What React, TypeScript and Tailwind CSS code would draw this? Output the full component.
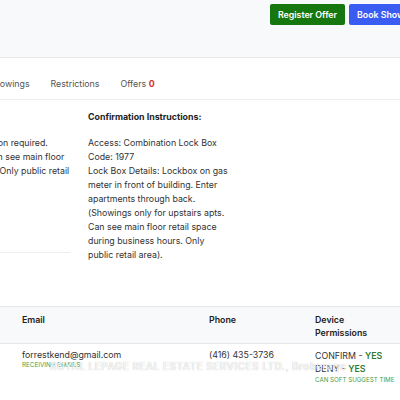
const font = { fontFamily: "Inter, 'Noto Sans', sans-serif" };

const instructions = [
  "Access: Combination Lock Box",
  "Code: 1977",
  "Lock Box Details: Lockbox on gas meter in front of building. Enter apartments through back. (Showings only for upstairs apts. Can see main floor retail space during business hours. Only public retail area).",
];

function Tabs() {
  return (
    <div className="flex h-[42px] items-start gap-[21px] border-b border-[#ececec] pt-[19px] text-[8.8px] text-[#555]">
      <span className="-ml-[11px]">Showings</span>
      <span>Restrictions</span>
      <span>
        Offers <span className="font-bold text-[#d32f2f]">0</span>
      </span>
    </div>
  );
}

export default function App() {
  return (
    <div style={font} className="relative h-[400px] w-[400px] overflow-hidden bg-white text-[#333]">
      <header className="flex h-[58px] items-start gap-[4px] border-b border-[#e8e8e8] bg-[#f8f9fa] pl-[270px] pt-[4px]">
        <button className="h-[21px] w-[75px] shrink-0 rounded-[2px] bg-[#17770f] text-[8.8px] font-semibold text-white">
          Register Offer
        </button>
        <button className="h-[21px] w-[90px] shrink-0 rounded-[2px] bg-[#3b5cf2] pl-[8px] text-left text-[8.8px] font-semibold text-white">
          Book Showing
        </button>
      </header>

      <Tabs />

      <section className="flex gap-[18px] pt-[10px] text-[8.8px] leading-[14px]">
        <div className="-ml-[100px] h-[143px] w-[170px] shrink-0 border-b border-[#eee] pt-[26px] whitespace-nowrap">
          <p>Appointment confirmation required.</p>
          <p>Upstairs suites only. Can see main floor</p>
          <p>retail space during day. Only public retail</p>
          <p>area.</p>
        </div>
        <div className="w-[142px] shrink-0">
          <h3 className="font-bold text-[#222]">Confirmation Instructions:</h3>
          <div className="mt-[12px]">
            {instructions.map((line) => (
              <p key={line}>{line}</p>
            ))}
          </div>
        </div>
      </section>

      <table className="mt-[44px] w-[420px] border-collapse text-left text-[8.8px]">
        <thead>
          <tr className="h-[37px] border-t border-b border-[#e6e6e6] bg-[#f8f9fa] align-top leading-[13px]">
            <th className="w-[209px] pl-[22px] pt-[6px] font-semibold text-[#222]">Email</th>
            <th className="w-[106px] pt-[6px] font-semibold text-[#222]">Phone</th>
            <th className="pt-[6px] font-semibold text-[#222]">
              Device
              <br />
              Permissions
            </th>
          </tr>
        </thead>
        <tbody>
          <tr className="align-top">
            <td className="pl-[22px] pt-[5px]">
              <div className="leading-[12px]">forrestkend@gmail.com</div>
              <div className="text-[6.3px] leading-[8px] text-[#43a047]">RECEIVING EMAILS</div>
            </td>
            <td className="pt-[5px] leading-[12px]">(416) 435-3736</td>
            <td className="pt-[5px]">
              <div className="leading-[13px]">
                CONFIRM - <span className="font-semibold text-[#2e7d32]">YES</span>
              </div>
              <div className="leading-[13px]">
                DENY - <span className="font-semibold text-[#2e7d32]">YES</span>
              </div>
              <div className="text-[6.2px] leading-[9px] text-[#43a047]">CAN SOFT SUGGEST TIME</div>
            </td>
          </tr>
        </tbody>
      </table>

      {/* brokerage watermark */}
      <div className="pointer-events-none absolute left-[50px] top-[359px] whitespace-nowrap text-[10px] font-semibold tracking-[0.5px] text-white/85 [text-shadow:0_0_1px_rgba(0,0,0,0.3)]">
        ROYAL LEPAGE REAL ESTATE SERVICES LTD., Brokerage
      </div>
    </div>
  );
}
